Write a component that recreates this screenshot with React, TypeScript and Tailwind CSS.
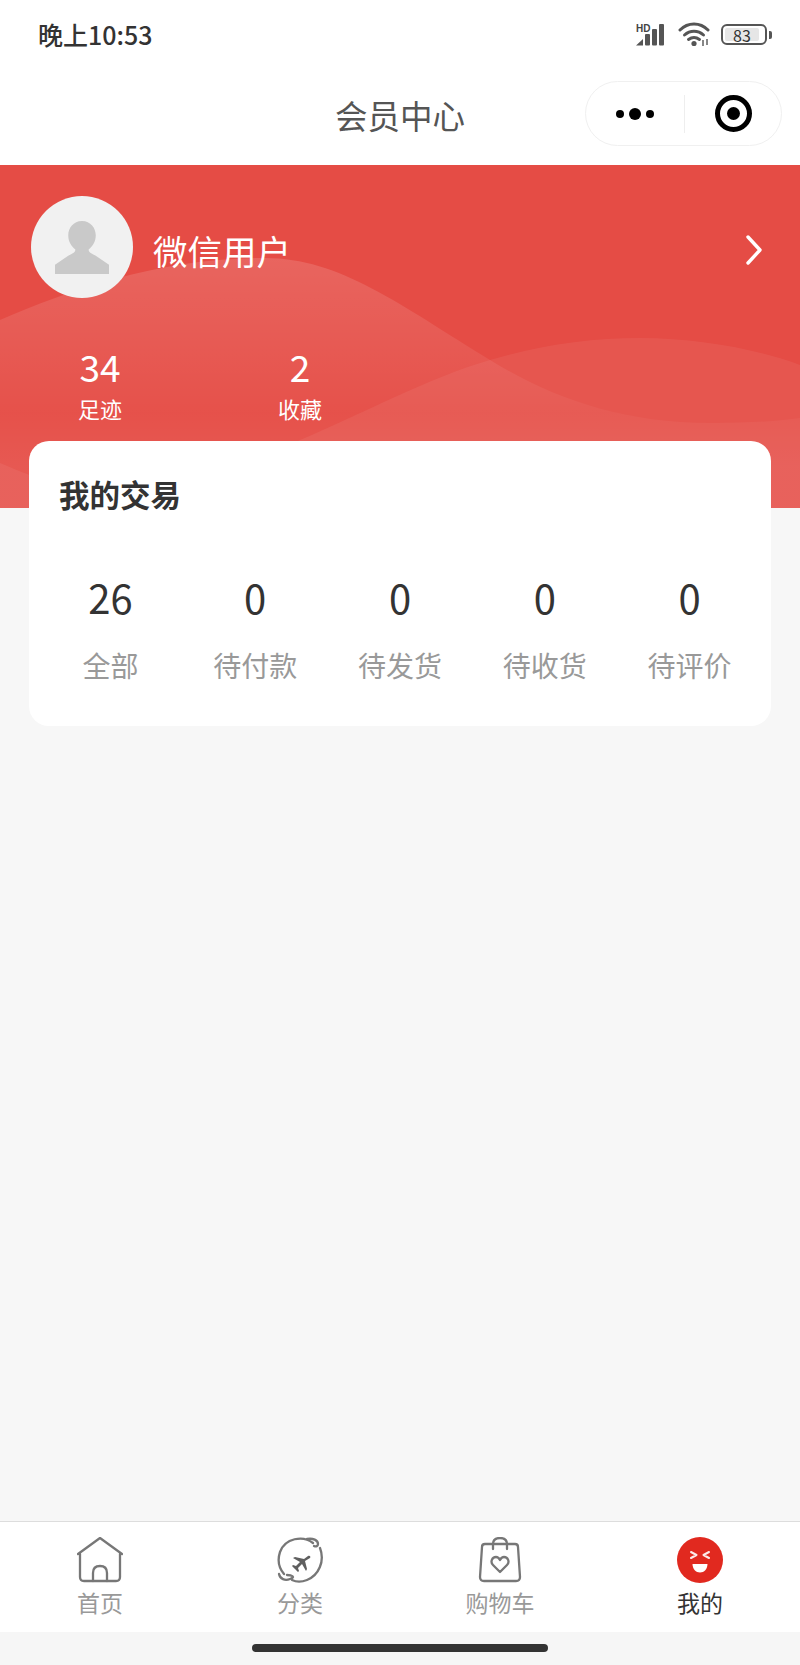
import React from "react";

const font = { fontFamily: '"Noto Sans CJK SC", "Noto Sans", sans-serif' };

function Signal() {
  return (
    <svg width="29" height="26" viewBox="0 -4 29 26" className="block overflow-visible">
      <text x="0" y="7.5" fontSize="10" fontWeight="700" fill="#444" fontFamily="Liberation Sans">HD</text>
      <g fill="#555">
        <path d="M0 21.5 L7 15 V21.5 Z" />
        <rect x="9" y="10" width="5" height="11.5" rx="1" />
        <rect x="16" y="5" width="5" height="16.5" rx="1" />
        <rect x="23" y="0" width="5" height="21.5" rx="1" />
      </g>
    </svg>
  );
}

function Wifi() {
  return (
    <svg width="34" height="25" viewBox="0 0 34 25" className="block">
      <g fill="none" stroke="#555" strokeWidth="3" strokeLinecap="round">
        <path d="M2 8 C10 0 22 0 30 8" />
        <path d="M6.5 13 C12 8 20 8 25.5 13" />
        <path d="M10.5 17.5 C14 15 18 15 21.5 17.5" />
      </g>
      <circle cx="16" cy="21.5" r="2.6" fill="#555" />
      <path d="M25 18 V24 M29 17 V23" stroke="#555" strokeWidth="1.4" />
    </svg>
  );
}

function Battery() {
  return (
    <div className="flex items-center">
      <div className="flex h-[21px] w-[46px] items-center rounded-[6px] border-2 border-[#555] p-[2px]">
        <div className="flex h-full w-[34px] items-center justify-center rounded-[2px] bg-[#e6e6e6] text-[16px] leading-none text-[#333]">83</div>
      </div>
      <div className="ml-[2px] h-[8px] w-[3px] rounded-r-[2px] bg-[#555]" />
    </div>
  );
}

function Waves() {
  return (
    <svg className="absolute inset-0 h-full w-full" viewBox="0 0 800 343" preserveAspectRatio="none">
      <defs>
        <linearGradient id="w1" x1="0" y1="93" x2="0" y2="300" gradientUnits="userSpaceOnUse">
          <stop offset="0" stopColor="#ffffff" stopOpacity="0.14" />
          <stop offset="0.75" stopColor="#ffffff" stopOpacity="0.03" />
          <stop offset="1" stopColor="#ffffff" stopOpacity="0.07" />
        </linearGradient>
      </defs>
      <path
        d="M0 155 C70 125 160 93 265 93 C340 93 400 140 490 195 C550 232 620 258 710 258 C750 258 780 256 800 253 V343 H0 Z"
        fill="url(#w1)"
      />
      <path
        d="M0 298 C40 315 100 340 180 332 C220 325 260 295 300 275 C360 250 430 212 490 195 C540 180 590 173 640 173 C700 173 760 185 800 200 V343 H0 Z"
        fill="#ffffff"
        fillOpacity="0.06"
      />
    </svg>
  );
}

function HomeIcon() {
  return (
    <svg width="46" height="46" viewBox="0 0 46 46" fill="none" stroke="#777777" strokeWidth="2.3" strokeLinejoin="round" strokeLinecap="round">
      <path d="M1 17 L23 1 L45 17" />
      <path d="M3 17 V40 Q3 44 7 44 H39 Q43 44 43 40 V17" />
      <path d="M16 44 V36 Q16 29 23 29 Q30 29 30 36 V44" />
    </svg>
  );
}

function CategoryIcon() {
  return (
    <svg width="46" height="46" viewBox="0 0 46 46" fill="none" stroke="#777777" strokeWidth="2.3" strokeLinecap="round">
      <path d="M36 6 C26 -2 8 1 3 15 C0 24 2 31 7 37" />
      <path d="M43 11 C48 24 42 38 30 43 C25 45 19 45 15 43" />
      <path d="M30 2 C36 1 41 3 41 7 C41 9 39 10 37 9" />
      <path d="M2 37 C3 42 8 44 13 42 C19 40 15 38 10 38" />
      <path
        d="M33 21 C34 20 33 18 31 19 L27 22 L18 20 L16 21 L23 25 L19 29 L16 28 L15 29 L18 32 L21 35 L22 34 L21 31 L25 27 L29 34 L30 32 L28 24 Z"
        fill="#5f5f5f"
        stroke="none"
      />
    </svg>
  );
}

function BagIcon() {
  return (
    <svg width="46" height="46" viewBox="0 0 46 46" fill="none" stroke="#777777" strokeWidth="2.3" strokeLinecap="round" strokeLinejoin="round">
      <path d="M8 7 H38 Q41 7 41 10 L43 40 Q43 44 39 44 H7 Q3 44 3 40 L5 10 Q5 7 8 7 Z" />
      <path d="M16 12 V7 Q16 1 23 1 Q30 1 30 7 V12" />
      <path d="M23 35 L16 28 C13 25 15 20 19 20 C21 20 22 21 23 23 C24 21 25 20 27 20 C31 20 33 25 30 28 Z" />
    </svg>
  );
}

function MineIcon() {
  return (
    <svg width="46" height="46" viewBox="0 0 46 46">
      <circle cx="23" cy="23" r="23" fill="#e1291f" />
      <path d="M14 15 L19.5 18 L14 21 M32 15 L26.5 18 L32 21" fill="none" stroke="#fff" strokeWidth="2" strokeLinecap="round" strokeLinejoin="round" opacity="0.9" />
      <path d="M15.5 27 H30.5 C30.5 32 27 35.5 23 35.5 C19 35.5 15.5 32 15.5 27 Z" fill="#fff" />
    </svg>
  );
}

const orders = [
  ["26", "全部"],
  ["0", "待付款"],
  ["0", "待发货"],
  ["0", "待收货"],
  ["0", "待评价"],
];

const tabs = [
  { label: "首页", icon: <HomeIcon /> },
  { label: "分类", icon: <CategoryIcon /> },
  { label: "购物车", icon: <BagIcon /> },
  { label: "我的", icon: <MineIcon />, active: true },
];

export default function App() {
  return (
    <div className="flex h-[1665px] w-[800px] flex-col overflow-hidden bg-[#f7f7f7]" style={font}>
      <div className="flex h-[65px] items-center justify-between bg-white pl-[38px] pr-[28px] pt-[4px]">
        <div className="text-[25px] font-medium leading-none text-[#333]">晚上10:53</div>
        <div className="flex items-center">
          <div className="mb-[4px] mr-[13px]">
            <Signal />
          </div>
          <div className="mr-[9px]">
            <Wifi />
          </div>
          <Battery />
        </div>
      </div>

      <div className="relative flex h-[100px] items-center justify-center bg-white">
        <div className="text-[32.5px] leading-none text-[#555]">会员中心</div>
        <div className="absolute right-[18px] top-[16px] flex h-[65px] w-[197px] items-center rounded-full border border-[#f0f0f0] bg-white">
          <div className="flex w-[98px] items-center justify-center gap-[5px]">
            <span className="h-[8px] w-[8px] rounded-full bg-black" />
            <span className="h-[12px] w-[12px] rounded-full bg-black" />
            <span className="h-[8px] w-[8px] rounded-full bg-black" />
          </div>
          <div className="h-[38px] w-px bg-[#eeeeee]" />
          <div className="flex flex-1 items-center justify-center">
            <div className="flex h-[37px] w-[37px] items-center justify-center rounded-full border-[5px] border-black">
              <div className="h-[13px] w-[13px] rounded-full bg-black" />
            </div>
          </div>
        </div>
      </div>

      <div className="relative h-[343px] bg-[#e54c45] text-white">
        <Waves />
        <div className="relative flex items-center pl-[31px] pr-[37px] pt-[31px]">
          <div className="flex h-[102px] w-[102px] items-center justify-center overflow-hidden rounded-full bg-[#f1f1f1]">
            <svg width="54" height="53" viewBox="0 0 53 52" className="block">
              <path
                d="M26.5 0 C35 0 40 7 40 14 C40 20 37 25 33 28 C33 31 36 32 40 34 L53 43 V52 H0 V43 L13 34 C17 32 20 31 20 28 C16 25 13 20 13 14 C13 7 18 0 26.5 0 Z"
                fill="#c9c9c9"
              />
            </svg>
          </div>
          <div className="ml-[20px] mt-[6px] flex-1 text-[34.5px] leading-none">微信用户</div>
          <svg className="mt-[6px]" width="18" height="30" viewBox="0 0 18 30" fill="none" stroke="#fff" strokeWidth="3.4" strokeLinecap="round" strokeLinejoin="round">
            <path d="M3 2 L15 15 L3 28" />
          </svg>
        </div>
        <div className="relative mt-[43px] flex">
          <div className="flex w-[200px] flex-col items-center">
            <div className="text-[37px] leading-[50px]">34</div>
            <div className="mt-[1px] text-[22px] leading-[32px]">足迹</div>
          </div>
          <div className="flex w-[200px] flex-col items-center">
            <div className="text-[37px] leading-[50px]">2</div>
            <div className="mt-[1px] text-[22px] leading-[32px]">收藏</div>
          </div>
        </div>
      </div>

      <div className="relative mx-[29px] -mt-[67px] h-[285px] rounded-[20px] bg-white px-[9px]">
        <div className="pl-[21px] pt-[33px] text-[30.5px] font-bold leading-[40px] text-[#333]">我的交易</div>
        <div className="mt-[55px] grid grid-cols-5">
          {orders.map(([n, l], i) => (
            <div key={i} className="flex flex-col items-center">
              <div className="text-[40px] leading-[56px] text-[#333]">{n}</div>
              <div className="mt-[20px] text-[28px] leading-[40px] text-[#999]">{l}</div>
            </div>
          ))}
        </div>
      </div>

      <div className="mt-auto h-[111px] border-t border-[#dddddd] bg-white">
        <div className="grid grid-cols-4 pt-[15px]">
          {tabs.map((t) => (
            <div key={t.label} className="flex flex-col items-center">
              {t.icon}
              <div className={`mt-[3px] text-[23px] leading-[32px] ${t.active ? "text-[#333]" : "text-[#999]"}`}>{t.label}</div>
            </div>
          ))}
        </div>
      </div>
      <div className="flex h-[33px] items-start justify-center bg-[#f6f6f6] pt-[12px]">
        <div className="h-[8px] w-[296px] rounded-full bg-[#333]" />
      </div>
    </div>
  );
}
